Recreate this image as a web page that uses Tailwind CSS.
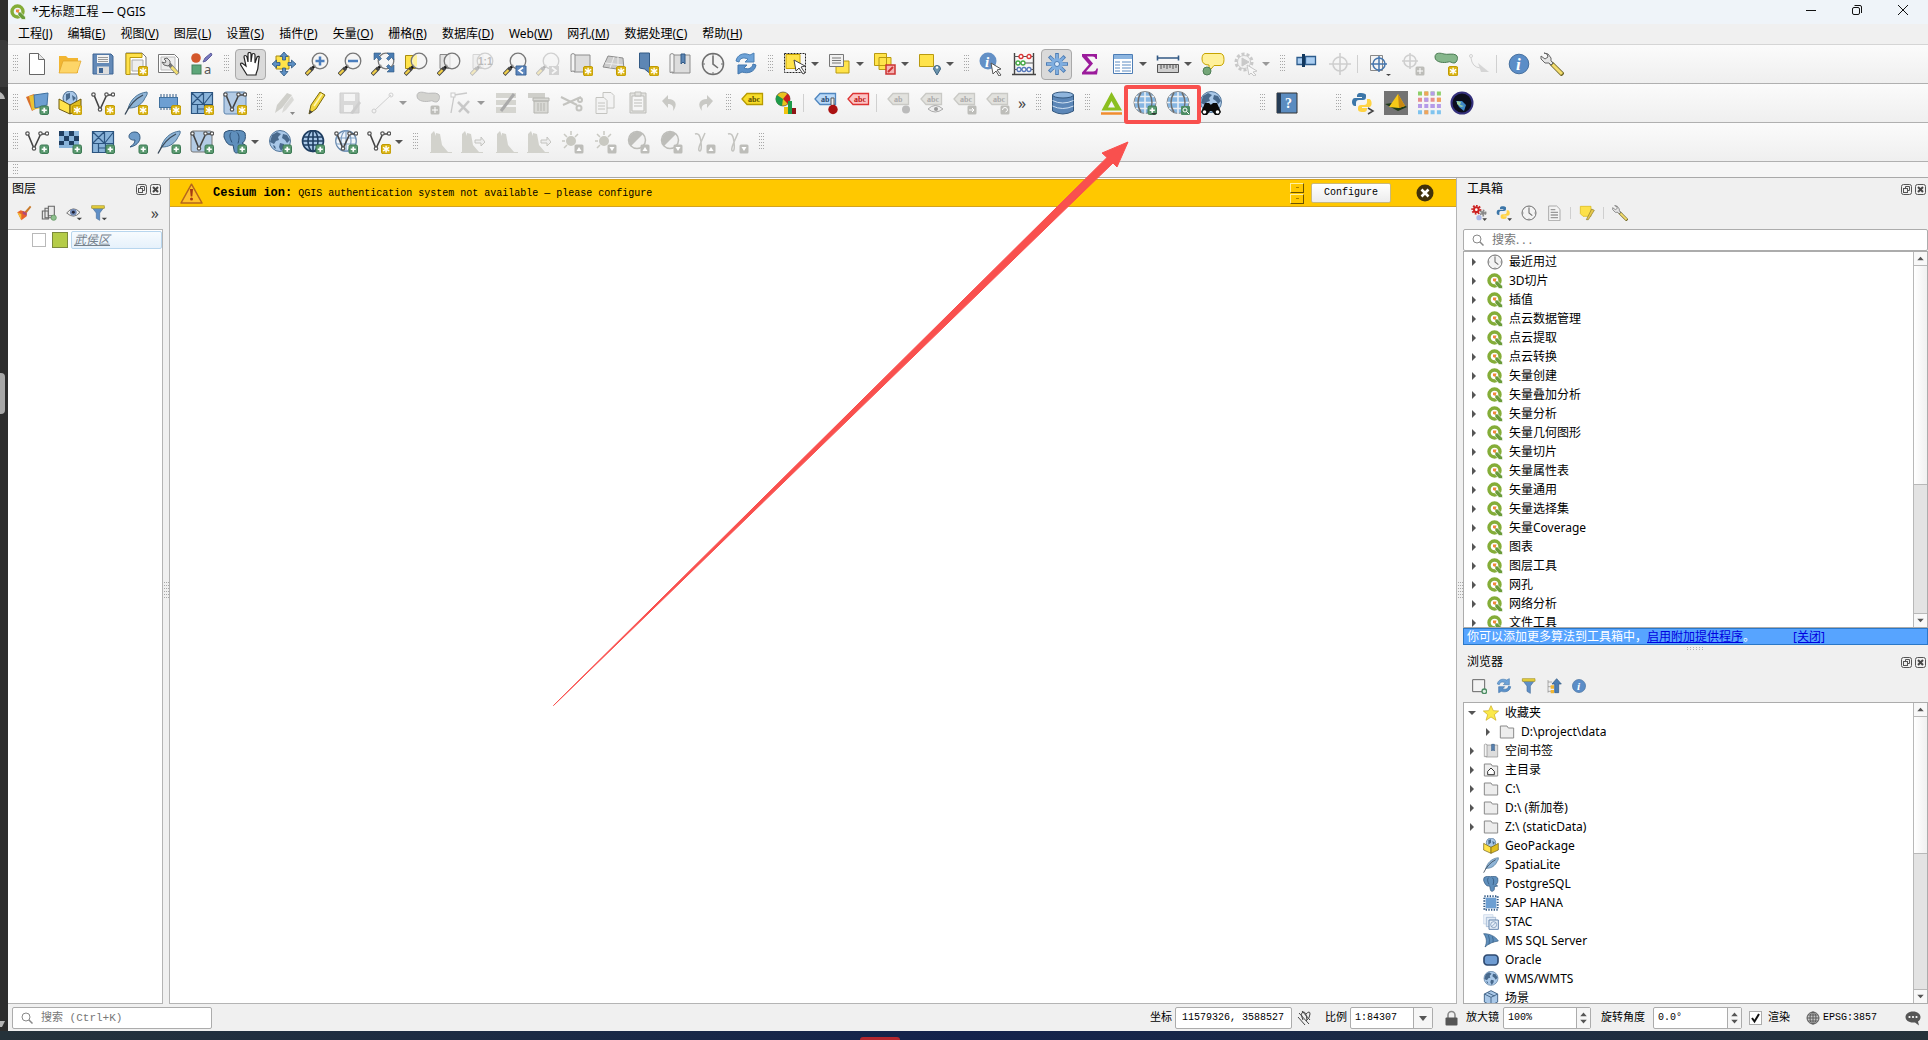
<!DOCTYPE html>
<html lang="zh-CN">
<head>
    <meta charset="UTF-8">
    <meta name="viewport" content="width=device-width, initial-scale=1.0">
    <title>*无标题工程 — QGIS</title>
    <script src="https://cdn.jsdelivr.net/npm/@tailwindcss/browser@4"></script>
</head>
<body class="h-screen flex flex-col overflow-hidden bg-[#f0f0f0] text-black text-[12px] leading-4 font-['Noto_Sans','Noto_Sans_CJK_SC',sans-serif]">
    <div class="relative flex flex-1 min-h-0">
        <!-- Desktop edge -->
        <div class="flex flex-col w-2 shrink-0 bg-[#2d2d2d]">
            <div class="h-10"></div>
            <div class="h-[47px] bg-[#3b3b3b] rounded-tr"></div>
            <svg class="w-2 h-4" viewBox="0 0 8 16"><path d="M0 5Q4 7 5 12H0z" fill="#b5b5b5"/></svg>
            <div class="h-[270px]"></div>
            <div class="w-[5px] h-[41px] bg-[#a8a8a8] rounded-r"></div>
            <div class="flex-1"></div>
            <svg class="w-2 h-4" viewBox="0 0 8 16"><path d="M0 6H5L2 12H0z" fill="#b5b5b5"/></svg>
        </div>

        <div class="flex flex-col flex-1 min-w-0">
            <!-- Title bar -->
            <header class="flex items-center h-6 bg-[#eff4f9] pl-[2px]">
                <svg class="w-4 h-4" viewBox="0 0 16 16"><use href="#qgis"/></svg>
                <h1 class="ml-[6px] flex-1">*无标题工程 — QGIS</h1>
                <button class="w-[46px] h-6 flex items-center justify-center" aria-label="最小化"><svg class="w-3 h-3 -mt-1" viewBox="0 0 12 12"><path d="M1 6.500h10" stroke="#111"/></svg></button>
                <button class="w-[46px] h-6 flex items-center justify-center" aria-label="还原"><svg class="w-3 h-3 -mt-1" viewBox="0 0 12 12" fill="none" stroke="#111"><rect x="1.500" y="3.500" width="7" height="7" rx="1.500"/><path d="M3.500 1.500h5.500q1.500 0 1.500 1.500v6"/></svg></button>
                <button class="w-[46px] h-6 mr-[2px] flex items-center justify-center" aria-label="关闭"><svg class="w-3 h-3 -mt-1" viewBox="0 0 12 12"><path d="M1 1l10 10M11 1L1 11" stroke="#111"/></svg></button>
            </header>

            <!-- Menu bar -->
            <nav class="flex items-center h-[21px] pl-[10px] gap-[15px] border-b border-[#d5d5d5] bg-[#f0f0f0]" id="menu"></nav>

            <!-- Tool bars -->
            <div class="flex flex-col" id="toolbars"></div>
            <div class="h-4 shrink-0 flex items-center pl-[5px] border-b border-[#a9a9a9] bg-[#f6f6f6]">
                <svg class="w-[5px] h-3" viewBox="0 0 5 12"><use href="#grip"/></svg>
            </div>

            <!-- Docks and map -->
            <main class="flex flex-1 min-h-0">
                <!-- Layers -->
                <section class="w-[155px] shrink-0 flex flex-col">
                    <div class="h-[22px] flex items-center pl-1 pr-[2px] gap-[3px]">
                        <h2 class="flex-1">图层</h2>
                        <button aria-label="浮动"><svg class="w-[11px] h-[11px]" viewBox="0 0 11 11"><use href="#float"/></svg></button>
                        <button aria-label="关闭"><svg class="w-[11px] h-[11px]" viewBox="0 0 11 11"><use href="#shut"/></svg></button>
                    </div>
                    <div class="h-7 flex items-center pl-2 gap-[9px] pb-[2px]" id="layerTools"></div>
                    <div class="flex-1 bg-white border border-[#b4b4b4] border-l-0 mt-px">
                        <div class="h-[19px] flex items-center pl-6">
                            <input type="checkbox" id="layer1" class="appearance-none w-[14px] h-[14px] border border-[#b9b9b9] bg-white" aria-label="武侯区 可见">
                            <span class="w-4 h-4 ml-[6px] bg-[#b5cc48] border border-[#7c8a3c]"></span>
                            <label for="layer1" class="flex-1 ml-[3px] h-[18px] pl-[2px] leading-4 border border-[#b8d6ee] rounded-xs bg-linear-to-b from-[#f7fbfe] to-[#e6f1fb] italic underline text-[#75818c]">武侯区</label>
                        </div>
                    </div>
                </section>
                <div class="w-[6px] shrink-0 flex items-center pl-px"><svg class="w-[5px] h-[18px]" viewBox="0 0 5 18"><use href="#grip"/></svg></div>

                <!-- Map canvas -->
                <section class="flex-1 min-w-0 flex flex-col bg-white border border-[#b4b4b4] border-t-0">
                    <div class="h-7 mt-px flex items-center bg-[#ffc800] border border-[#d3a220] border-x-0 pl-[10px] font-['Liberation_Mono','Noto_Sans_CJK_SC',monospace] text-[10px]">
                        <svg class="w-[23px] h-[21px]" viewBox="0 0 23 21"><path d="M11.500 1.200L22 20H1z" fill="#ffc02a" stroke="#b5651d" stroke-width="1.500" stroke-linejoin="round"/><path d="M10 6h3l-.7 7.500h-1.600z" fill="#a63a12"/><circle cx="11.500" cy="16" r="1.500" fill="#a63a12"/></svg>
                        <p class="flex-1 ml-[10px] pt-px"><b class="text-[12px]">Cesium ion:</b> QGIS authentication system not available — please configure</p>
                        <div class="flex flex-col gap-[1px] mr-[7px]">
                            <button class="w-[14px] h-[10px] border border-[#fff0a0] border-r-[#6b5200] border-b-[#6b5200] flex items-center justify-center" aria-label="上一条"><span class="w-[3px] h-px bg-[#a67c00]"></span></button>
                            <button class="w-[14px] h-[10px] border border-[#fff0a0] border-r-[#6b5200] border-b-[#6b5200] flex items-center justify-center" aria-label="下一条"><span class="w-[3px] h-px bg-[#a67c00]"></span></button>
                        </div>
                        <button class="w-[80px] h-5 border border-[#c9b87a] rounded-xs bg-linear-to-b from-white to-[#ececec]">Configure</button>
                        <button class="ml-[25px] mr-[22px]" aria-label="关闭"><svg class="w-[18px] h-[18px]" viewBox="0 0 18 18"><circle cx="9" cy="9" r="8.500" fill="#41310a"/><path d="M5.500 5.500l7 7M12.500 5.500l-7 7" stroke="#fff" stroke-width="2.600"/></svg></button>
                    </div>
                </section>
                <div class="w-[6px] shrink-0 flex items-center pl-px"><svg class="w-[5px] h-[18px]" viewBox="0 0 5 18"><use href="#grip"/></svg></div>

                <!-- Right docks -->
                <aside class="w-[465px] shrink-0 flex flex-col">
                    <section class="h-[467px] shrink-0 flex flex-col">
                        <div class="h-[22px] flex items-center pl-1 pr-[2px] gap-[3px]">
                            <h2 class="flex-1">工具箱</h2>
                            <button aria-label="浮动"><svg class="w-[11px] h-[11px]" viewBox="0 0 11 11"><use href="#float"/></svg></button>
                            <button aria-label="关闭"><svg class="w-[11px] h-[11px]" viewBox="0 0 11 11"><use href="#shut"/></svg></button>
                        </div>
                        <div class="h-[29px] flex items-center pl-2 pb-[3px] gap-[9px]" id="boxTools"></div>
                        <label class="h-[22px] flex items-center pl-2 gap-2 border border-[#acacac] rounded-xs bg-white text-[#777]">
                            <svg class="w-3 h-3" viewBox="0 0 12 12" fill="none" stroke="#888"><circle cx="5" cy="5" r="4"/><path d="M8 8l3.500 3.500" stroke-width="1.500"/></svg>
                            <input type="text" class="flex-1 outline-none placeholder:text-[#777]" placeholder="搜索. . .">
                        </label>
                        <div class="flex-1 min-h-0 flex bg-white border border-[#acacac]">
                            <ul class="flex-1 overflow-hidden" id="boxTree"></ul>
                            <div class="w-[14px] flex flex-col border-l border-[#b8b8b8] bg-[#e3e3e3]">
                                <svg class="h-[14px] bg-[#f8f8f8] border-b border-[#b8b8b8]" viewBox="0 0 14 14"><path d="M3.500 9L7 5l3.500 4z" fill="#555"/></svg>
                                <div class="h-[219px] bg-linear-to-r from-white to-[#f0f0f0] border-b border-[#b8b8b8]"></div>
                                <div class="flex-1"></div>
                                <svg class="h-[14px] bg-[#f8f8f8] border-t border-[#b8b8b8]" viewBox="0 0 14 14"><path d="M3.500 5L7 9l3.500-4z" fill="#555"/></svg>
                            </div>
                        </div>
                        <p class="h-[17px] leading-[15px] pl-[3px] bg-[#57a4ff] border border-[#2a78c8] text-white">你可以添加更多算法到工具箱中，<a href="#" class="underline text-[#0000e0]">启用附加提供程序</a>。<a href="#" class="ml-[38px] underline text-[#0000e0]">[关闭]</a></p>
                    </section>
                    <div class="h-[6px] shrink-0 flex items-center justify-center"><svg class="w-[18px] h-[5px]" viewBox="0 0 18 5"><path d="M0 1.500h18M0 3.500h18" stroke="#b5b5b5" stroke-dasharray="1 2"/></svg></div>
                    <section class="flex-1 min-h-0 flex flex-col">
                        <div class="h-[22px] flex items-center pl-1 pr-[2px] gap-[3px]">
                            <h2 class="flex-1">浏览器</h2>
                            <button aria-label="浮动"><svg class="w-[11px] h-[11px]" viewBox="0 0 11 11"><use href="#float"/></svg></button>
                            <button aria-label="关闭"><svg class="w-[11px] h-[11px]" viewBox="0 0 11 11"><use href="#shut"/></svg></button>
                        </div>
                        <div class="h-[29px] flex items-center pl-2 pb-[3px] gap-[9px]" id="browserTools"></div>
                        <div class="flex-1 min-h-0 flex bg-white border border-[#acacac]">
                            <ul class="flex-1 overflow-hidden" id="browserTree"></ul>
                            <div class="w-[14px] flex flex-col border-l border-[#b8b8b8] bg-[#e3e3e3]">
                                <svg class="h-[14px] bg-[#f8f8f8] border-b border-[#b8b8b8]" viewBox="0 0 14 14"><path d="M3.500 9L7 5l3.500 4z" fill="#555"/></svg>
                                <div class="h-[137px] bg-linear-to-r from-white to-[#f0f0f0] border-b border-[#b8b8b8]"></div>
                                <div class="flex-1"></div>
                                <svg class="h-[14px] bg-[#f8f8f8] border-t border-[#b8b8b8]" viewBox="0 0 14 14"><path d="M3.500 5L7 9l3.500-4z" fill="#555"/></svg>
                            </div>
                        </div>
                    </section>
                </aside>
            </main>

            <!-- Status bar -->
            <footer class="h-[27px] shrink-0 flex items-center pl-1 pr-[7px] font-['Liberation_Mono','Noto_Sans_CJK_SC',monospace] text-[10px]">
                <label class="w-[200px] h-[22px] flex items-center pl-2 gap-2 border border-[#acacac] rounded-xs bg-white">
                    <svg class="w-3 h-3" viewBox="0 0 12 12" fill="none" stroke="#888"><circle cx="5" cy="5" r="4"/><path d="M8 8l3.500 3.500" stroke-width="1.500"/></svg>
                    <input type="text" class="flex-1 min-w-0 outline-none text-[11px] placeholder:text-[#777]" placeholder="搜索 (Ctrl+K)">
                </label>
                <div class="flex-1"></div>
                <label for="coord" class="text-[11px]">坐标</label>
                <input id="coord" type="text" value="11579326, 3588527" class="w-[117px] h-[22px] ml-[3px] pl-[6px] border border-[#acacac] rounded-xs bg-white">
                <button class="ml-[5px]" aria-label="范围"><svg class="w-4 h-4" viewBox="0 0 16 16" fill="none" stroke="#444"><path d="M2 3l10 11M5 1l8 9M1 7l7 8M6 10q-3-7 0-8t4 8M9 4q4-4 4 0T9 11"/></svg></button>
                <label for="scale" class="ml-3 text-[11px]">比例</label>
                <span class="relative ml-[3px] w-[83px] h-[22px]">
                    <select id="scale" class="appearance-none w-full h-full pl-[4px] border border-[#acacac] rounded-xs bg-white"><option>1:84307</option></select>
                    <svg class="absolute right-px top-px w-[19px] h-5 border-l border-[#acacac] bg-[#f6f6f6] pointer-events-none" viewBox="0 0 18 20"><path d="M5 8h8l-4 5z" fill="#555"/></svg>
                </span>
                <button class="ml-3" aria-label="锁定比例"><svg class="w-[13px] h-4" viewBox="0 0 13 16"><path d="M3 8V5a3.500 3.500 0 017 0v3" fill="none" stroke="#8a8a8a" stroke-width="1.600"/><rect x=".5" y="7.500" width="12" height="8" rx="1" fill="#555"/></svg></button>
                <label for="mag" class="ml-2 text-[11px]">放大镜</label>
                <span class="ml-[4px] flex w-[88px] h-[22px] border border-[#acacac] rounded-xs bg-white">
                    <input id="mag" type="text" value="100%" class="flex-1 min-w-0 pl-1">
                    <svg class="w-[14px] h-5 border-l border-[#acacac] bg-[#f6f6f6]" viewBox="0 0 14 20"><path d="M3.500 8L7 4l3.500 4zM3.500 12L7 16l3.500-4z" fill="#555"/></svg>
                </span>
                <label for="rot" class="ml-[10px] text-[11px]">旋转角度</label>
                <span class="ml-[8px] flex w-[89px] h-[22px] border border-[#acacac] rounded-xs bg-white">
                    <input id="rot" type="text" value="0.0°" class="flex-1 min-w-0 pl-1">
                    <svg class="w-[14px] h-5 border-l border-[#acacac] bg-[#f6f6f6]" viewBox="0 0 14 20"><path d="M3.500 8L7 4l3.500 4zM3.500 12L7 16l3.500-4z" fill="#555"/></svg>
                </span>
                <span class="relative ml-[7px] w-[13px] h-[14px]">
                    <input id="render" type="checkbox" checked class="appearance-none block w-[13px] h-[14px] border border-[#acacac] bg-white">
                    <svg class="absolute inset-0 w-[13px] h-[14px] pointer-events-none" viewBox="0 0 13 14"><path d="M3 7l2.500 3.500L10 3" fill="none" stroke="#111" stroke-width="2"/></svg>
                </span>
                <label for="render" class="ml-[6px] text-[11px]">渲染</label>
                <button class="ml-4 flex items-center gap-[3px]"><svg class="w-[14px] h-[14px]" viewBox="0 0 14 14" fill="none" stroke="#5a5a5a"><circle cx="7" cy="7" r="6" fill="#c8c8c8"/><ellipse cx="7" cy="7" rx="3" ry="6"/><path d="M1 7h12M7 1v12M2 4h10M2 10h10"/></svg>EPSG:3857</button>
                <button class="ml-[28px]" aria-label="消息"><svg class="w-4 h-4" viewBox="0 0 16 16"><path d="M8 1.500c4.500 0 7.500 2.500 7.500 5.500 0 2-1 3.500-2.500 4.500l1 4-4-3H8C3.500 12.500.5 10 .5 7S3.500 1.500 8 1.500z" fill="#555"/><circle cx="4.500" cy="7" r="1.100" fill="#fff"/><circle cx="8" cy="7" r="1.100" fill="#fff"/><circle cx="11.500" cy="7" r="1.100" fill="#fff"/></svg></button>
            </footer>
        </div>

        <!-- Annotation drawn over the window -->
        <svg class="absolute left-0 top-0 w-[1210px] h-[720px] pointer-events-none" viewBox="0 0 1210 720">
            <rect x="1126" y="87" width="73" height="35" rx="1" fill="none" stroke="#f9504e" stroke-width="4"/>
            <path d="M1128 142L1102 153L1107 157.500L553.500 705.500L1113 163L1117 167z" fill="#f9504e" stroke="#f9504e" stroke-width="1" stroke-linejoin="round"/>
        </svg>
    </div>
    <!-- Desktop below the window -->
    <div class="h-[9px] shrink-0 flex justify-center bg-linear-to-r from-[#25323a] via-[#14224c] to-[#25323a]">
        <div class="w-[40px] h-[3px] mt-[6px] mr-[168px] rounded-t-full bg-[#b3262e]"></div>
    </div>

    <!-- Shared shapes -->
    <svg class="hidden">
        <symbol id="grip" viewBox="0 0 5 18" preserveAspectRatio="xMinYMin slice"><path d="M.5 0v18M2.500 0v18M4.500 0v18" stroke="#a8a8a8" stroke-dasharray="1 2"/></symbol>
        <symbol id="float" viewBox="0 0 11 11"><g fill="none" stroke="#555"><rect x=".5" y=".5" width="10" height="10" rx="2"/><rect x="2.500" y="4.500" width="4" height="4"/><path d="M4.500 4.500v-2h4v4h-2"/></g></symbol>
        <symbol id="shut" viewBox="0 0 11 11"><rect x=".5" y=".5" width="10" height="10" rx="2" fill="none" stroke="#555"/><path d="M3 3l5 5M8 3l-5 5" stroke="#444" stroke-width="2"/></symbol>
        <symbol id="qgis" viewBox="0 0 16 16"><circle cx="7.500" cy="7.500" r="5.500" fill="none" stroke="#84ad38" stroke-width="3.400"/><path d="M8 8h2.500l5 5v2.500h-3.500l-4-4.500z" fill="#6a9c3a" stroke="#fff" stroke-width=".6"/><path d="M6 5.500h3.500L8.500 9 6 8z" fill="#f0883a"/></symbol>
        <symbol id="plus" viewBox="0 0 24 24"><rect x="15" y="15" width="8.500" height="8.500" rx="1.500" fill="#5b9a70" stroke="#3d7a54"/><path d="M19.250 16.700v5.100M16.700 19.250h5.100" stroke="#fff" stroke-width="1.700"/></symbol>
        <symbol id="star" viewBox="0 0 24 24"><rect x="14.500" y="14.500" width="9.200" height="9.200" rx="1.500" fill="#dcb616" stroke="#c09a00"/><path d="M19.100 15.800v6.600M16 17.400l6.200 3.400M22.200 17.400L16 20.800" stroke="#fff" stroke-width="1.400"/></symbol>
        <symbol id="lens" viewBox="0 0 24 24"><path d="M1 22.500l6.500-6.500" stroke="#444" stroke-width="4"/><path d="M1.500 22l4-4" stroke="#f0cf4a" stroke-width="2.400"/><path d="M7.500 16l3-3" stroke="#111" stroke-width="2.500"/><circle cx="15" cy="9" r="7.800" fill="#f4f4f4" fill-opacity=".75" stroke="#777" stroke-width="1.300"/></symbol>
        <symbol id="vee" viewBox="0 0 24 24"><g fill="none" stroke="#555" stroke-width="1.200"><path d="M3 4l6 14.500L15.500 4.500M16 4h5.500" stroke="#444" stroke-width="1.600"/><g fill="#fff"><circle cx="2.500" cy="3.500" r="1.700"/><circle cx="15.500" cy="3.500" r="1.700"/><circle cx="22" cy="3.500" r="1.700"/><circle cx="9" cy="18.500" r="1.700"/></g></g></symbol>
        <symbol id="feather" viewBox="0 0 24 24"><path d="M4 18C6 9 13 2 23 1c1 3-2 5-3 8-4 6-9 8-15 8z" fill="#8fb4d6" stroke="#4d7699"/><path d="M1 23.500C5 15 11 8 19 4" fill="none" stroke="#3a4a5a" stroke-width="1.300"/></symbol>
        <symbol id="earth" viewBox="0 0 24 24"><circle cx="12" cy="11" r="10.500" fill="#a9c8e8" stroke="#54779b"/><path d="M4 5l5-3 4 2-3 3 1 3-3 1-2 3-4-2zM15 4l4 1 3 5-3 3-2-3-3-2zM12 13l4 1 0 3-3 4-2-4zM5 15l2 1 1 3-2-1z" fill="#48698c"/></symbol>
        <symbol id="wgrid" viewBox="0 0 24 24"><g fill="none" stroke-width="1.200"><circle cx="12" cy="11" r="10.300" stroke="#6688ad" fill="#f1f6fc"/><path d="M2 8h20M2 14h20M12 1v20" stroke="#7f9fc2"/><ellipse cx="12" cy="11" rx="5" ry="10.300" stroke="#7f9fc2"/></g></symbol>
        <symbol id="mesh" viewBox="0 0 24 24"><path d="M1 1h22v22H1z" fill="#8ab4da"/><path d="M1.500 1.500h21v21h-21zM1.500 13.500h21M13.500 1.500v12M1.500 1.500l12 12M13.500 1.500l-12 12M22.500 2l-9 11.500M7.500 13.500v9M7.500 18h7M14.500 13.500v9" fill="none" stroke="#2c5580" stroke-width="1.200"/></symbol>
        <symbol id="pgel" viewBox="0 0 24 24"><path d="M2 2c4-2 7-2 9-1 4-1 9-1 11 2 1 5 0 9-3 10l3 2-5 1v4c-1 4-6 4-6 0l-1-5c-5 1-7-3-9-8 0-2 0-4 1-5z" fill="#5f8fbc" stroke="#2b4f74"/><path d="M8 2.500c-2 3-1 6 1 10M14 2.500c3 3 2 7 1 11" fill="none" stroke="#2b4f74"/></symbol>
        <symbol id="curl" viewBox="0 0 24 24"><path d="M11 2c-4 0-6 2-6 4.500S8 10.500 11 10c0 3-2 5-5 7 6-1 10-5 10-9.500C16 4 14 2 11 2z" fill="#6f9cc9" stroke="#33597f"/></symbol>
        <symbol id="gfolder" viewBox="0 0 24 24"><path d="M2 3h10l2 3h8v15H2z" fill="#ededed" stroke="#8a8a8a" stroke-width="1.500"/></symbol>
        <symbol id="tag" viewBox="0 0 24 24"><path d="M1 8l5-5.500h15.500v11H6z" stroke-width="1.300"/></symbol>
        <symbol id="sync" viewBox="0 0 24 24"><path d="M2 9C3 3 9 0 16 3l4-2v9h-9l3-3C9 5 6 6 5 10z" fill="#6ea3d8" stroke="#4d80b4"/><path d="M22 13c-1 7-8 9-14 7l-4 2v-9h9l-3 3c5 2 8 0 9-4z" fill="#5a90c8" stroke="#4377ad"/></symbol>
        <symbol id="stone" viewBox="0 0 24 24"><rect x="14.500" y="14.500" width="9" height="9" rx="1.500" fill="#bdbdb9"/></symbol>
    </svg>

    <script>
        const use = (...ids) => ids.map(id => `<use href="#${id}"/>`).join('');
        const label = (fill, stroke, ink, body = 'abc', extra = '') =>
            `<g fill="${fill}" stroke="${stroke}"><use href="#tag"/></g><text x="7" y="11" font-size="8" font-weight="bold" font-family="Liberation Serif" fill="${ink}">${body}</text>${extra}`;
        const hist = x => `<path d="M${x} 22V4l3-3 2 5v16M${x + 5} 22V3l4 1 2 11 6 7z" fill="#d2d2cc"/><path d="M${x - 1} 22.500h22" stroke="#d2d2cc"/>`;
        const globe = '<circle cx="12" cy="11.500" r="11" fill="#86b6e2" stroke="#8a8a8a"/><path d="M3 5.500h18M1 11.500h22M3 17.500h18" stroke="#e9eef3" stroke-width="1.600"/><path d="M8 1.500q-6 10 0 20M16 1.500q6 10 0 20" fill="none" stroke="#6d6d6d" stroke-width="1.500"/><path d="M12 1v22" stroke="#e9eef3" stroke-width="1.600"/>';

        // 24x24 artwork for the tool bar buttons
        const icons = {
            new: '<path d="M4.500 1.500h9l6 6v15h-15z" fill="#fff" stroke="#666"/><path d="M13.500 1.500v6h6" fill="#e6e6e6" stroke="#666"/>',
            open: '<path d="M1 21V4h7l2 2h10v15z" fill="#f2b632"/><path d="M1 21L5 9h18l-4 12z" fill="#fdd568" stroke="#e0a52a" stroke-width=".7"/>',
            save: '<path d="M2 2h18l2 2v18H2z" fill="#6389b7" stroke="#3f6593"/><path d="M6 3h12v8H6z" fill="#f2f2f2"/><path d="M7 5.500h10M7 7.500h10M7 9.500h10" stroke="#999"/><path d="M6 14.500h12V22H6z" fill="#ddd"/><path d="M8 16h4v5H8z" fill="#3f6593"/>',
            layout: '<path d="M2 1h16l4 4v17H2z" fill="#fff" stroke="#777"/><path d="M2 1.500h16v4H6v17H2z" fill="#ffe14a" stroke="#b99a10"/><path d="M8 8h11v11H8z" fill="#eee" stroke="#aaa"/>' + use('star'),
            layouts: '<path d="M1.500 2.500h16l4 4v14h-20z" fill="#fff" stroke="#777"/><path d="M4 5h14v13H4z" fill="#eee" stroke="#bbb"/><path d="M12 12l9 10" stroke="#777" stroke-width="4"/><path d="M14.500 15l6 6.500" stroke="#f1de72" stroke-width="2.600"/><path d="M7 7l3-1 3 3v3l-2 2-4-1-2-3 3 1 1-2z" fill="#ddd" stroke="#666"/>',
            style: '<circle cx="6" cy="6" r="4.800" fill="#d4572b"/><path d="M13 10l2-4 6-5 1 2-6 6z" fill="#7a7ac0" stroke="#5c5c9c"/><rect x="2" y="13" width="9" height="9" fill="#5da679" stroke="#44805c"/><text x="14" y="22" font-size="13" fill="#555" font-family="Noto Sans">a</text>',
            hand: '<path d="M8 23l-5-8c-2-3-2-4 0-4l4 3-2-9c0-2 2-2 3 0l1 5V2c0-2 3-2 3 0v8l1-7c0-2 3-2 3 0v8l2-6c1-1 3-1 2 1l-1 9c0 4-2 5-2 8z" fill="#fff" stroke="#222" stroke-width="1.200"/>',
            pan: '<path d="M4 4h13v13H4z" fill="#ffe34a" stroke="#a98c10"/><path d="M12 0l4 4.500h-2.500V8h-3V4.500H8zM12 24l4-4.500h-2.500V16h-3v3.500H8zM0 12l4.500-4v2.500H8v3H4.500V16zM24 12l-4.500-4v2.500H16v3h3.500V16z" fill="#5c8fc4" stroke="#2f577f" stroke-width=".8"/>',
            zin: use('lens') + '<path d="M15 4.500v9M10.500 9h9" stroke="#4a7dbd" stroke-width="2.500"/>',
            zout: use('lens') + '<path d="M10 9h10" stroke="#4a7dbd" stroke-width="2.500"/>',
            zfull: use('lens') + '<path d="M3 1h7L7.500 3.500l3 3-2 2-3-3L3 8zM23 1h-7l2.500 2.500-3 3 2 2 3-3L23 8zM23 20h-7l2.500-2.500-3-3 2-2 3 3L23 13z" fill="#4a7db3" stroke="#2f577f" stroke-width=".6"/>',
            zsel: '<path d="M1.500 3.500h10v13h-10z" fill="#ffe34a" stroke="#a98c10"/>' + use('lens') + '<path d="M11 3.500q-4 5 0 11h2V3z" fill="#fff29c"/>',
            zlay: '<path d="M3 2.500h10v14H3z" fill="#e2e2e2" stroke="#888"/>' + use('lens'),
            znat: '<g opacity=".3"><path d="M3 2.500h10v14H3z" fill="#e2e2e2" stroke="#888"/>' + use('lens') + '<text x="8" y="13" font-size="10" font-weight="bold" fill="#333" font-family="Liberation Sans">1:1</text></g>',
            zlast: use('lens') + '<path d="M13 14h10v9H13z" fill="#5c86bd" stroke="#3b6497"/><path d="M20 15.500l-4 3 4 3" fill="none" stroke="#fff" stroke-width="1.600"/>',
            znext: '<g opacity=".3">' + use('lens') + '<path d="M13 14h10v9H13z" fill="#888"/><path d="M16 15.500l4 3-4 3" fill="none" stroke="#fff" stroke-width="1.600"/></g>',
            newmap: '<path d="M5 3h16v17H5z" fill="#ddd" stroke="#8d8d8d"/><path d="M2 2.500q2-2 4 0v17q-2-1-4 0z" fill="#f4f4f4" stroke="#8d8d8d"/>' + use('star'),
            new3d: '<path d="M6 4l15 2 1 12-21-3z" fill="#cdcdcd" stroke="#8d8d8d"/><path d="M3 11l18 2M12 5l-4 11M16 5v12" stroke="#eee"/>' + use('star'),
            newmark: '<path d="M4.500 1h10v20l-5-4-5-1z" fill="#5d86b4" stroke="#335a85"/>' + use('star'),
            marks: '<path d="M4 3h18v18H4z" fill="#ddd" stroke="#8d8d8d"/><path d="M2 2.500q2-2 4 0v18q-2-1-4 0z" fill="#f4f4f4" stroke="#8d8d8d"/><path d="M13 2h4v10l-2-2-2 2z" fill="#5d86b4" stroke="#335a85"/>',
            clock: '<circle cx="12" cy="12" r="10.500" fill="#f3f3f3" stroke="#6f6f6f" stroke-width="1.500"/><path d="M12 4v8l5 4" fill="none" stroke="#6f6f6f" stroke-width="1.600"/><path d="M12 2v2M22 12h-2M12 22v-2M2 12h2" stroke="#6f6f6f"/>',
            refresh: use('sync'),
            select: '<path d="M1.500 1.500h21v19h-21z" fill="none" stroke="#222" stroke-dasharray="2 1"/><path d="M3 2.500h14v14H3z" fill="#ffe34a" stroke="#c9a400"/><path d="M11 8l11 6-4 1 4 6-2 1-4-6-3 3z" fill="#fff" stroke="#444"/>',
            form: '<path d="M8 9h13v12H8z" fill="#ffe34a" stroke="#b99a10"/><path d="M1.500 2.500h14v12h-14z" fill="#f1f1f1" stroke="#777"/><path d="M4 6h9M4 8.500h9M4 11h9" stroke="#777" stroke-width="1.200"/>',
            desel: '<path d="M1.500 1.500h12v12h-12zM6 5.500h12v12H6z" fill="#ffe34a" stroke="#b99a10"/><path d="M13 13h9v9h-9z" fill="#f4b3b3" stroke="#cc3333" stroke-width="1.500"/><path d="M15 20l5-5" stroke="#cc3333" stroke-width="2"/>',
            selloc: '<path d="M1.500 2.500h14v12h-14z" fill="#ffe34a" stroke="#b99a10"/><path d="M19 23l-3.500-6a3.500 3.500 0 117 0z" fill="#6b93ad" stroke="#3e6480"/><circle cx="19" cy="15.500" r="1.200" fill="#fff"/>',
            identify: '<circle cx="9" cy="9" r="8.500" fill="#6390c6"/><text x="6" y="14.500" font-size="15" font-style="italic" font-weight="bold" fill="#fff" font-family="Liberation Serif">i</text><path d="M12 11l10 6-4 1 4 5-2 1-3-5-3 3z" fill="#fff" stroke="#555"/>',
            abacus: '<path d="M2.500 1v21M21.500 1v21M0 22.500h24" stroke="#444" stroke-width="1.400"/><path d="M2 4.500h20M2 11h20M2 17.500h20" stroke="#555"/><g fill="#fff" stroke-width="1.300"><g stroke="#d33"><circle cx="9" cy="4.500" r="2"/><circle cx="17" cy="4.500" r="2"/></g><g stroke="#4a4"><circle cx="6" cy="11" r="2"/><circle cx="11" cy="11" r="2"/></g><g stroke="#57b"><circle cx="7" cy="17.500" r="2"/><circle cx="12" cy="17.500" r="2"/><circle cx="17" cy="17.500" r="2"/></g></g>',
            gear: '<path d="M12 1v22M1 12h22M4.200 4.200l15.600 15.600M19.800 4.200L4.200 19.800" stroke="#4d7db5" stroke-width="3.600"/><path d="M12 2v20M2 12h20M5 5l14 14M19 5L5 19" stroke="#7faee0" stroke-width="2"/><circle cx="12" cy="12" r="6" fill="#7faee0"/><circle cx="12" cy="12" r="2.500" fill="#dceafa" stroke="#4d7db5"/>',
            sigma: '<path d="M4 2h15v5h-1.500q0-2.500-3-2.500H9l6 7-7 8h7q3 0 3.500-3H20l-1 6H4v-2l7-8-7-8z" fill="#9b1b9b"/>',
            table: '<path d="M2.500 2.500h19v19h-19z" fill="#fff" stroke="#4d7db5"/><path d="M3 3h18v4H3z" fill="#8cb5e0"/><path d="M4 10h5M4 13h5M4 16h5M4 19h5M11 10h9M11 13h9M11 16h9M11 19h9" stroke="#5d8cc2"/>',
            ruler: '<path d="M1 6h22M1.500 3.500v5M22.500 3.500v5" stroke="#335a85" stroke-width="1.600"/><path d="M1.500 12.500h21v8h-21z" fill="#cfcfcf" stroke="#555"/><path d="M5 13v4M8 13v3M11 13v4M14 13v3M17 13v4M20 13v3" stroke="#555"/>',
            tip: '<path d="M4 1.500h15q4 0 4 6t-4 6h-6l-5 6V13q-7 0-7-6 0-5 3-5.500z" fill="#fff19a" stroke="#c7a400"/><circle cx="6" cy="19" r="4" fill="#74a678" stroke="#4d7d55"/>',
            gearoff: '<g opacity=".35" stroke="#777"><circle cx="10" cy="10" r="8" fill="none" stroke-width="3" stroke-dasharray="3 2"/><circle cx="10" cy="10" r="6.500" fill="#eee"/><path d="M8 6l7 4-7 4z" fill="#777"/><path d="M13 13l10 6-4 1 3 3-2 1-3-3-2 2z" fill="#fff"/></g>',
            snap: '<path d="M2 5.500h8v7H2zM10.500 4.500h10v8h-10z" fill="#a9cdf1" stroke="#2c5b8c" stroke-width="1.300"/><path d="M8.500 2v13" stroke="#12385e" stroke-width="3"/>',
            cross: '<g opacity=".35" fill="none" stroke="#888" stroke-width="1.600"><circle cx="12" cy="12" r="7"/><path d="M12 1v22M1 12h22"/></g>',
            cross2: '<path d="M2.500 3.500h12v15h-12z" fill="#f4f4f4" stroke="#888"/><g fill="none" stroke="#4676ad" stroke-width="1.500"><circle cx="11" cy="12" r="6"/><path d="M11 4v16M3 12h16"/></g><path d="M18 22h5l-2.500 2z" fill="#444"/>',
            cross3: '<g opacity=".35" fill="none" stroke="#888" stroke-width="1.600"><circle cx="9" cy="9" r="6"/><path d="M9 1v16M1 9h16"/></g>' + use('stone') + '<path d="M19 16v6M16 19h6" stroke="#fff"/>',
            poly: '<path d="M1 5c0-5 6-4 9-3s9-1 12 1 1 8-2 8-3-2-6-1-13 1-13-5z" fill="#86b78c" stroke="#4d7d55"/>' + use('star'),
            nodeoff: '<g opacity=".4"><circle cx="4" cy="4" r="1.500" fill="none" stroke="#999"/><path d="M4 6q1 9 9 10" fill="none" stroke="#999"/><path d="M11 11l11 9-8 0z" fill="#aaa"/></g>',
            info: '<circle cx="12" cy="12" r="9.800" fill="#5b8dc7" stroke="#46709f"/><text x="9" y="18" font-size="17" font-style="italic" font-weight="bold" fill="#fff" font-family="Liberation Serif">i</text>',
            wrench: '<path d="M11 11l12 12" stroke="#6d6424" stroke-width="4.500"/><path d="M12.500 12.500l9.500 9.500" stroke="#f4dd6f" stroke-width="3"/><path d="M4 1l4 1 3 4 0 3 2 2-2 2-2-2-4 0-4-4v-3l4 3 3-2-1-3z" fill="#e6e6e6" stroke="#666"/>',

            addlayer: '<path d="M1 6l8-3 6 12-8 5z" fill="#d9702c"/><path d="M4 5l10-2 2 14-9 2z" fill="#ecc233"/><path d="M9 4l14-2-1 12-12 3z" fill="#6d9fd2" stroke="#40719f"/>' + use('plus'),
            gpkg: '<circle cx="12" cy="7" r="7" fill="#a9c8e8" stroke="#48698c"/><path d="M8 3l4-1 0 5-4 3zM14 4l4 3-3 3z" fill="#48698c"/><path d="M1 8l11 6v9L1 18z" fill="#ffe34a" stroke="#6d5a10"/><path d="M23 8l-11 6v9l11-5z" fill="#e0bd20" stroke="#6d5a10"/>',
            newgpkg: '<circle cx="12" cy="7" r="7" fill="#a9c8e8" stroke="#48698c"/><path d="M8 3l4-1 0 5-4 3zM14 4l4 3-3 3z" fill="#48698c"/><path d="M1 8l11 6v9L1 18z" fill="#ffe34a" stroke="#6d5a10"/><path d="M23 8l-11 6v9l11-5z" fill="#e0bd20" stroke="#6d5a10"/>' + use('star'),
            newvec: use('vee', 'star'),
            newlite: use('feather', 'star'),
            newmem: '<path d="M4 3v16M7 3v16M10 3v16M13 3v16M16 3v16M19 3v16" stroke="#335a85"/><rect x="2.500" y="6.500" width="18" height="10" fill="#6d9fd2" stroke="#40719f"/>' + use('star'),
            newmesh: use('mesh', 'star'),
            newgps: '<rect x="1" y="1" width="22" height="22" rx="2" fill="#b3cbe5" stroke="#5d84ad"/>' + use('vee', 'star'),
            pens: '<g fill="#cfcfca"><path d="M3 22l2-8 10-12 5 2L10 17z"/><path d="M10 22l2-7 8-10 2 4-8 10z" opacity=".7"/><path d="M18 21h5l-2.500 3z" fill="#888"/></g>',
            pen: '<path d="M4 23l2-9L15 1l5 3-9 14z" fill="#f2d63c" stroke="#7c6a10"/><path d="M9 15L17 3" stroke="#fff7b5" stroke-width="1.500"/><path d="M4 23l.7-4 3 2z" fill="#444"/>',
            saveoff: '<g opacity=".3"><path d="M2 2h19v20H2z" fill="#999" stroke="#777"/><path d="M6 3h11v7H6zM6 14h9v7H6z" fill="#f3f3f3"/><path d="M12 22l9-12 2 2-8 11z" fill="#777"/></g>',
            lineoff: '<g opacity=".4" fill="none" stroke="#999"><path d="M4 19L20 4"/><circle cx="3" cy="20" r="2"/><circle cx="20" cy="4" r="2"/></g>',
            polyoff: '<path d="M1 5c0-5 6-4 9-3s9-1 12 1 1 8-2 8-3-2-6-1-13 1-13-5z" fill="#d3d3cf" stroke="#bbb"/>' + use('stone') + '<path d="M19 16v6M16 19h6" stroke="#fff"/>',
            vertoff: '<g opacity=".4"><path d="M2 22L5 5M5 4l13-2" stroke="#888" stroke-width="1.300"/><rect x="2" y="2" width="4" height="4" fill="#fff" stroke="#888"/><path d="M9 11l11 11M20 10L10 21" stroke="#888" stroke-width="2.500"/></g>',
            editoff: '<path d="M2 2h20v5H2zM2 9h20v5H2zM2 16h20v6H2z" fill="#d5d5d0"/><path d="M7 20L20 3" stroke="#aaa" stroke-width="3"/>',
            deloff: '<path d="M1 2h17v5H1z" fill="#cfcfca"/><path d="M6 7h16v3H6zM7 10h14v12H7z" fill="#d9d9d5" stroke="#b5b5b0"/><path d="M11 12v8M14 12v8M17 12v8" stroke="#b5b5b0"/>',
            cutoff: '<g fill="none" stroke="#c4c4c0" stroke-width="2"><path d="M1 6l16 8M3 14L21 6"/><circle cx="19" cy="17" r="2.500"/><circle cx="20" cy="9" r="2"/></g>',
            copyoff: '<g fill="#f3f3f3" stroke="#c4c4c0"><path d="M10 1.500h8l3 3V17H10z"/><path d="M3 6.500h8l3 3v13H3z"/><path d="M5 12h7M5 15h7M5 18h7"/></g>',
            pasteoff: '<g fill="#e2e2df" stroke="#bdbdb9"><path d="M4 2h16v20H4z"/><path d="M6 5h12v15H6z" fill="#f6f6f6"/><path d="M9 1h6v4H9zM8 9h8M8 12h8M8 15h8"/></g>',
            undooff: '<path d="M3 10l6-6v4c8 0 10 6 5 12 1-5-1-7-5-7v4z" fill="#c9c9c5"/>',
            redooff: '<path d="M21 10l-6-6v4C7 8 5 14 10 20c-1-5 1-7 5-7v4z" fill="#c9c9c5"/>',
            abc: label('#f7dd2a', '#b79a00', '#5b4d00'),
            chart: '<circle cx="9" cy="8" r="7" fill="#e9c21d" stroke="#333" stroke-width=".6"/><path d="M9 8L13.500 2.500A7 7 0 0114 13z" fill="#c81e1e"/><path d="M9 8L3 4a7 7 0 005 11z" fill="#1e9a4a"/><path d="M10 16h4v7h-4z" fill="#f1c40f"/><path d="M14 10h4v13h-4z" fill="#1e9a4a"/><path d="M18 17h4v6h-4z" fill="#8e1616"/>',
            abpin: label('#b9d9f8', '#4f86bf', '#24466b', 'ab', '<path d="M17 14V7h3v7" fill="#eee" stroke="#555"/><circle cx="19" cy="18.500" r="4.700" fill="#a11"/>'),
            abcred: label('#fbc4c4', '#d33', '#b11'),
            aboff1: label('#e2e2de', '#c9c9c5', '#aaa', 'ab', '<circle cx="19" cy="18.500" r="4" fill="#bbb"/>'),
            aboff2: label('#e2e2de', '#c9c9c5', '#aaa', 'abc', '<path d="M8 18q7-7 15 0-8 6-15 0z" fill="#eee" stroke="#aaa"/><circle cx="16" cy="18" r="2" fill="#999"/>'),
            aboff3: label('#e2e2de', '#c9c9c5', '#aaa', 'abc', use('stone') + '<path d="M16 19h5M19 17l2 2-2 2" fill="none" stroke="#fff"/>'),
            aboff4: label('#e2e2de', '#c9c9c5', '#aaa', 'abc', use('stone') + '<path d="M16.500 19a2.500 2.500 0 115 0 2.500 2.500 0 01-2 2" fill="none" stroke="#fff"/>'),
            db: '<path d="M1.500 4v16q10 6 21 0V4z" fill="#5c87b8" stroke="#33587f"/><ellipse cx="12" cy="4" rx="10.500" ry="3" fill="#8fb5dd" stroke="#33587f"/><path d="M1.500 9.500q10 5 21 0M1.500 15q10 5 21 0" fill="none" stroke="#d0e1f2"/>',
            cesium: '<path d="M11.500 1L22 19.500H1.500zM11.500 10L8 16.500h7z" fill="#8bbf1f" fill-rule="evenodd"/><path d="M1 22.500h21" stroke="#f08c2e" stroke-width="2.500"/>',
            globeadd: globe + use('plus') + '<path d="M18 22h6l-3 2z" fill="#333"/>',
            globefind: globe + '<rect x="15" y="15" width="9" height="9" rx="1" fill="#4c8c63"/><circle cx="19" cy="19" r="2" fill="none" stroke="#fff"/><path d="M20.500 20.500l2.500 2.500" stroke="#fff"/>',
            binoc: use('earth') + '<path d="M2 21l4-9h4l2 2 2-2h4l4 9-2 3h-4l-3-4h-2l-3 4H4z" fill="#0a0a0a"/><circle cx="5.500" cy="21" r="1.800" fill="#fff"/><circle cx="18.500" cy="21" r="1.800" fill="#fff"/>',
            help: '<path d="M2 2h20v20H2z" fill="#5b8cc0" stroke="#333"/><path d="M2 2h4v20H2z" fill="#263c55"/><text x="10" y="17" font-size="14" font-weight="bold" fill="#fff" font-family="Liberation Serif">?</text>',
            pycon: '<path d="M10 2C6 2 6 4 6 6h5v1H4c-4 0-4 8 0 8h1v-3c0-2 1-3 3-3h4c2 0 3-1 3-3V4c0-1-2-2-5-2z" fill="#3c76a8"/><path d="M12 21c4 0 4-2 4-4h-5v-1h7c4 0 3-8 0-8h-2v3c0 2-1 3-3 3h-3c-2 0-3 1-3 3v1c0 2 1 3 5 3z" fill="#ffd343"/><path d="M17 17l5 3-5 3" fill="none" stroke="#444" stroke-width="1.500"/>',
            arrow3d: '<path d="M0 0h24v24H0z" fill="#737373"/><path d="M1 13l13 7 9-4-8-5z" fill="#1e3a18"/><path d="M14 3l7 12-6 2-10-1z" fill="#f6c919"/><path d="M14 3l1 14 6-2z" fill="#c98912"/>',
            pixels: '<g fill="none" stroke-width="4" stroke-dasharray="4 2.300"><path d="M1 2.500h23" stroke="#8ecf6a"/><path d="M1 8.700h23" stroke="#e88f8f"/><path d="M1 15h23" stroke="#b59be8"/><path d="M1 21.300h23" stroke="#7fc3ee"/><path d="M7.300 2.500h4M19.900 8.700h4M7.300 21.300h4" stroke="#f0a45a"/><path d="M7.300 8.700h4M13.600 15h4M13.600 2.500h4" stroke="#b59be8"/></g>',
            night: '<circle cx="12" cy="12" r="10.500" fill="#0b0d1c" stroke="#34307c" stroke-width="2"/><path d="M6 10l6 0 4 4-2 6-5-4z" fill="#3e87c6"/><path d="M7 10l4 1-1 3 4 1-3 1-4-3z" fill="#9fd0a0"/>',

            addvec: use('vee', 'plus'),
            addras: '<path d="M1 1h20v17H1z" fill="#8ab4da"/><path d="M1 1h5v5H1zM11 1h5v5h-5zM6 6h5v5H6zM16 6h5v5h-5zM1 11h5v4H1zM11 11h5v4h-5z" fill="#1f3e61"/>' + use('plus'),
            addmesh: use('mesh', 'plus'),
            addcsv: use('curl', 'plus'),
            addlite: use('feather', 'plus'),
            addgps: '<rect x="1" y="1" width="21" height="21" rx="2" fill="#b3cbe5" stroke="#777"/>' + use('vee', 'plus'),
            addpg: use('pgel', 'plus'),
            addwms: use('earth', 'plus'),
            addwcs: '<circle cx="12" cy="11" r="10.500" fill="#a9c8e8"/><g stroke="#1f3e61" stroke-width="1.600" fill="none"><circle cx="12" cy="11" r="10.500"/><path d="M2 7h20M1 11h22M2 15h20M12 1v20"/><ellipse cx="12" cy="11" rx="5" ry="10.500"/></g>' + use('plus'),
            addwfs: use('wgrid', 'vee', 'plus'),
            newvirt: use('vee', 'star'),
            hist1: hist(3),
            hist2: hist(1) + '<path d="M14 10h6V7l4 5-4 4v-3h-6z" fill="#eee" stroke="#c4c4c0"/>',
            sunup: '<circle cx="11" cy="11" r="5" fill="#c9c9c2"/><path d="M11 1v4M2 11h3M4 4l3 3M18 4l-3 3M4 18l3-3" stroke="#c9c9c2" stroke-width="1.500"/>' + use('stone') + '<path d="M16.500 21l2.500-4 2.500 4z" fill="#fff"/>',
            sundn: '<circle cx="11" cy="11" r="5" fill="#c9c9c2"/><path d="M11 1v4M2 11h3M4 4l3 3M18 4l-3 3M4 18l3-3" stroke="#c9c9c2" stroke-width="1.500"/>' + use('stone') + '<path d="M16.500 17l2.500 4 2.500-4z" fill="#fff"/>',
            conup: '<circle cx="11" cy="10" r="8.500" fill="#f2f2f2" stroke="#bdbdb9" stroke-width="1.500"/><path d="M5 16A8.500 8.500 0 0117 4z" fill="#bdbdb9"/>' + use('stone') + '<path d="M16.500 21l2.500-4 2.500 4z" fill="#fff"/>',
            condn: '<circle cx="11" cy="10" r="8.500" fill="#f2f2f2" stroke="#bdbdb9" stroke-width="1.500"/><path d="M5 16A8.500 8.500 0 0117 4z" fill="#bdbdb9"/>' + use('stone') + '<path d="M16.500 17l2.500 4 2.500-4z" fill="#fff"/>',
            gamup: '<path d="M3 4q5-2 6 8l4-9M9 12q-4 9-1 9 2-1 1-9" fill="none" stroke="#c4c4c0" stroke-width="1.500"/>' + use('stone') + '<path d="M16.500 21l2.500-4 2.500 4z" fill="#fff"/>',
            gamdn: '<path d="M3 4q5-2 6 8l4-9M9 12q-4 9-1 9 2-1 1-9" fill="none" stroke="#c4c4c0" stroke-width="1.500"/>' + use('stone') + '<path d="M16.500 17l2.500 4 2.500-4z" fill="#fff"/>',

            brush: '<path d="M13 10l8-9 2 2-7 9z" fill="#c97a2b"/><path d="M2 11l5-3 9 3 0 6-8 6z" fill="#e8642a"/><path d="M2 11l6 3 0 9z" fill="#f2c037"/><path d="M10 9l6 3v4l-6-3z" fill="#b04a77"/>',
            group: '<g fill="#e9e9e9" stroke="#666" stroke-width="1.600"><path d="M2 9h9v12H2zM6 5h10v14H6z"/><path d="M11 2h9v14h-9z"/></g><circle cx="19" cy="19" r="4" fill="#8ebf8e" stroke="#5a905a"/>',
            eye: '<path d="M1 12q10-12 20-1-9 11-20 1z" fill="#eee" stroke="#777" stroke-width="1.500"/><circle cx="11" cy="11" r="5" fill="#7189b5"/><circle cx="11" cy="11" r="2.200" fill="#223"/><path d="M16 19h8l-4 4z" fill="#444"/>',
            filter: '<path d="M2 3h19l-7 9v11l-5-3v-8z" fill="#5f8fc7" stroke="#47709e"/><path d="M2 1h19v4H2z" fill="#e8d13c" stroke="#a5942a"/>',
            filterm: '<path d="M1 3h19l-7 9v11l-5-3v-8z" fill="#5f8fc7" stroke="#47709e"/><path d="M1 1h19v4H1z" fill="#e8d13c" stroke="#a5942a"/><path d="M16 19h8l-4 4z" fill="#444"/>',
            gears: '<g fill="none" stroke-dasharray="2.500 2"><circle cx="8" cy="7" r="6" stroke="#c22" stroke-width="3"/><circle cx="18" cy="12" r="4" stroke="#888" stroke-width="2.500"/></g><circle cx="8" cy="7" r="5" fill="#c22"/><circle cx="8" cy="7" r="2" fill="#fff"/><circle cx="18" cy="12" r="3" fill="#888"/><circle cx="12" cy="19" r="4" fill="#a8b8e8"/><path d="M17 20h7l-3.500 4z" fill="#444"/>',
            pym: '<path d="M10 2C6 2 6 4 6 6h5v1H4c-4 0-4 8 0 8h1v-3c0-2 1-3 3-3h4c2 0 3-1 3-3V4c0-1-2-2-5-2z" fill="#3c76a8"/><path d="M12 21c4 0 4-2 4-4h-5v-1h7c4 0 3-8 0-8h-2v3c0 2-1 3-3 3h-3c-2 0-3 1-3 3v1c0 2 1 3 5 3z" fill="#ffd343"/><path d="M17 20h7l-3.500 4z" fill="#444"/>',
            log: '<path d="M4 1.500h12l5 5v17H4z" fill="#f3f3f3" stroke="#aaa" stroke-width="1.500"/><path d="M7 7h7M7 11h11M7 15h11M7 19h11" stroke="#999" stroke-width="2"/>',
            inplace: '<path d="M2 2h16v15H6l-4-4z" fill="#fde14a" stroke="#d9b50c"/><path d="M11 22L19 6l4 2-9 14z" fill="#e6c84a" stroke="#8c7a30"/>',
            addsel: '<path d="M2.500 2.500h18v18h-18z" fill="#f3f3f3" stroke="#666" stroke-width="1.500"/><circle cx="20" cy="20" r="3.500" fill="#dff0e4" stroke="#4c8c63" stroke-width="2"/>',
            collapse: '<path d="M3 3v19M3 6h6M3 13h6M3 20h6" stroke="#888"/><path d="M7 11h5v5H7zM7 18h5v5H7z" fill="#f2b632"/><path d="M16 1l7 8h-4v13h-6V9H9z" fill="#4a7db3" stroke="#2c5580"/>'
        };

        const menus = ['工程(J)', '编辑(E)', '视图(V)', '图层(L)', '设置(S)', '插件(P)', '矢量(O)', '栅格(R)', '数据库(D)', 'Web(W)', '网孔(M)', '数据处理(C)', '帮助(H)'];
        document.getElementById('menu').innerHTML = menus.map(m =>
            `<button class="whitespace-nowrap">${m.replace(/\((.)\)/, '(<u>$1</u>)')}</button>`).join('');

        // "|" grip, "-" separator, "_" empty slot, ">" drop-down arrow, "!" pressed
        const rows = [
            'new open save layout layouts style | hand! pan zin zout zfull zsel zlay znat zlast znext newmap new3d newmark marks clock refresh | select> form> desel> selloc> | identify abacus gear! sigma table> ruler> tip gearoff> | snap cross - cross2 cross3 poly nodeoff - info wrench',
            'addlayer newgpkg newvec newlite newmem newmesh newgps | pens pen saveoff lineoff> polyoff vertoff> editoff deloff cutoff copyoff pasteoff undooff redooff | abc chart - abpin abcred - aboff1 aboff2 aboff3 aboff4 » | db | cesium globeadd globefind binoc _ | help _ | pycon arrow3d pixels night',
            'addvec addras addmesh addcsv addlite addgps addpg> addwms addwcs addwfs newvirt> | hist1 hist2 hist1 hist2 sunup sundn conup condn gamup gamdn |'
        ];
        const grip = '<span class="w-4 shrink-0 flex justify-center"><svg class="w-[5px] h-[18px]" viewBox="0 0 5 18"><use href="#grip"/></svg></span>';
        const item = t => {
            if (t === '|') return grip;
            if (t === '-') return '<span class="w-[6px] h-[18px] shrink-0 border-l border-[#d0d0d0] ml-px"></span>';
            if (t === '_') return '<span class="w-[27px] shrink-0"></span>';
            if (t === '»') return '<button class="w-4 shrink-0 text-[16px] text-[#444]">»</button>';
            const name = t.replace(/[>!]/, '');
            const box = t.endsWith('!')
                ? 'w-[31px] h-[31px] mx-px shrink-0 flex items-center justify-center rounded-sm border border-[#a9a9a9] bg-[#dadada]'
                : 'w-[33px] h-[31px] shrink-0 flex items-center justify-center';
            const arrow = t.endsWith('>')
                ? `<button class="w-3 h-[31px] shrink-0 flex items-center" aria-label="${name} 菜单"><svg class="w-2 h-2" viewBox="0 0 8 8"><path d="M0 2h8L4 6z" fill="${/off/.test(name) ? '#999' : '#555'}"/></svg></button>` : '';
            return `<button class="${box}" aria-label="${name}"><svg class="w-6 h-6" viewBox="0 0 24 24" fill="none">${icons[name]}</svg></button>${arrow}`;
        };
        document.getElementById('toolbars').innerHTML = rows.map(r =>
            `<div class="h-[39px] flex items-center pl-[5px] border-b border-[#b0b0b0] bg-linear-to-b from-[#fbfbfb] to-[#efefef]"><svg class="w-[5px] h-[18px] shrink-0 mr-[2px]" viewBox="0 0 5 18"><use href="#grip"/></svg>${r.split(' ').map(item).join('')}</div>`).join('');

        const small = names => names.split(' ').map(n => n === '-'
            ? '<span class="w-px h-3 -mx-px bg-[#cfcfcf]"></span>'
            : `<button class="shrink-0" aria-label="${n}"><svg class="w-4 h-4" viewBox="0 0 24 24">${icons[n]}</svg></button>`).join('');
        document.getElementById('layerTools').innerHTML = small('brush group eye filterm') + '<button class="ml-auto mr-1 text-[16px] text-[#444]">»</button>';
        document.getElementById('boxTools').innerHTML = small('gears pym clock log - inplace - wrench');
        document.getElementById('browserTools').innerHTML = small('addsel refresh filter collapse info');

        const twisty = open => `<svg class="w-2 h-2 shrink-0" viewBox="0 0 8 8"><path d="${open ? 'M0 2h8L4 6z' : 'M2 0v8l4-4z'}" fill="#555"/></svg>`;
        const q = '<svg class="w-4 h-4 shrink-0" viewBox="0 0 16 16"><use href="#qgis"/></svg>';
        const pic = n => `<svg class="w-4 h-4 shrink-0" viewBox="0 0 24 24">${n}</svg>`;

        // Processing toolbox
        const groups = ['最近用过', '3D切片', '插值', '点云数据管理', '点云提取', '点云转换', '矢量创建', '矢量叠加分析', '矢量分析', '矢量几何图形', '矢量切片', '矢量属性表', '矢量通用', '矢量选择集', '矢量Coverage', '图表', '图层工具', '网孔', '网络分析', '文件工具'];
        document.getElementById('boxTree').innerHTML = groups.map((g, i) =>
            `<li class="h-[19px] flex items-center pl-[6px]">${twisty(false)}<span class="ml-[9px] mr-[6px]">${i ? q : pic(icons.clock)}</span>${g}</li>`).join('');

        // Browser: name, artwork, state ("open", "shut", "child" or none)
        const folder = '<use href="#gfolder"/>';
        const sources = [
            ['收藏夹', '<path d="M12 1l3.500 7.500 8 .5-6.500 5.500 2.500 8.500-7.500-5-7.500 5L7 14.500.5 9l8-.5z" fill="#fbe94a" stroke="#c9a91a"/>', 'open'],
            ['D:\\project\\data', folder, 'child'],
            ['空间书签', icons.marks, 'shut'],
            ['主目录', folder + '<path d="M7 19v-5l5-5 5 5v5z" fill="#fff" stroke="#333" stroke-width="1.500"/>', 'shut'],
            ['C:\\', folder, 'shut'],
            ['D:\\ (新加卷)', folder, 'shut'],
            ['Z:\\ (staticData)', folder, 'shut'],
            ['GeoPackage', icons.gpkg],
            ['SpatiaLite', use('feather')],
            ['PostgreSQL', use('pgel')],
            ['SAP HANA', '<path d="M2 2h20v20H2z" fill="none" stroke="#335a85" stroke-width="3" stroke-dasharray="2 2"/><path d="M4 4h16v16H4z" fill="#6d9fd2"/>'],
            ['STAC', '<path d="M1 1h14v14H1z" fill="#eef3fa" stroke="#c3d2e6"/><path d="M5 5h14v14H5z" fill="#dfe9f5" stroke="#8fa9c8"/><path d="M9 9h14v14H9z" fill="#e6eef8" stroke="#6585ac" stroke-width="1.500"/><circle cx="16" cy="16" r="4.500" fill="none" stroke="#6585ac"/><path d="M13 19l6-6" stroke="#6585ac"/>'],
            ['MS SQL Server', '<path d="M1 1c9 0 18 4 22 11-7 1-15 4-20 9 3-7 3-13-2-20z" fill="#5f8fbc" stroke="#2f577f"/><path d="M8 3q3 7 1 14M14 5q2 5 1 9" fill="none" stroke="#2f577f"/>'],
            ['Oracle', '<rect x="1.500" y="4.500" width="21" height="15" rx="5" fill="#6f9cd2" stroke="#2f4a70" stroke-width="2.500"/>'],
            ['WMS/WMTS', use('earth')],
            ['场景', '<path d="M12 1l10 5v12l-10 5-10-5V6z" fill="#a9c8e8" stroke="#48698c" stroke-width="1.500"/><path d="M2 6l10 5 10-5M12 11v12M7 4l10 5" fill="none" stroke="#48698c" stroke-width="1.500"/>']
        ];
        document.getElementById('browserTree').innerHTML = sources.map(([name, art, state]) =>
            `<li class="h-[19px] flex items-center ${state === 'child' ? 'pl-5' : 'pl-1'}">${state ? twisty(state === 'open') : '<span class="w-2 shrink-0"></span>'}<span class="ml-[7px] mr-[6px]">${pic(art)}</span>${name}</li>`).join('');
    </script>
</body>
</html>
